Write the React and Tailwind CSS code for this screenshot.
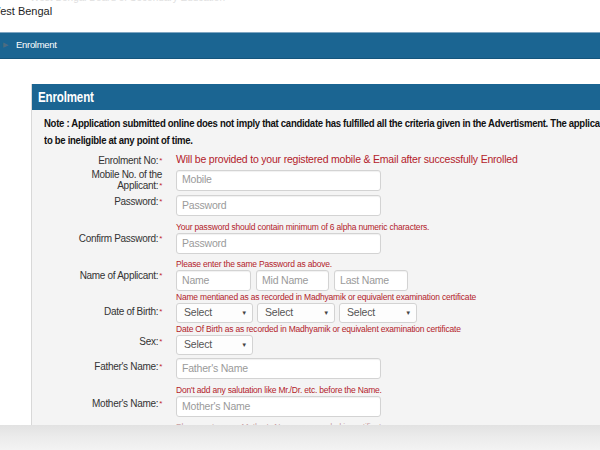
const sans = "font-['Liberation_Sans',Arial,sans-serif]";

function Label({ children, className = '' }) {
    return (
        <div className={`w-[130px] shrink-0 text-right text-[10px] tracking-[-0.3px] leading-[11px] text-[#333] ${className}`}>
            {children}
            <span className="ml-[1px] text-[#c0282d] text-[8px] align-top">*</span>
        </div>
    );
}

function Help({ children, className = '' }) {
    return <p className={`text-[8.5px] tracking-[-0.2px] leading-[11px] text-[#b3232b] whitespace-nowrap ${className}`}>{children}</p>;
}

function Field({ placeholder, w = 'w-[205px]' }) {
    return (
        <div className={`${w} h-[21px] bg-white border border-[#d3d3d3] rounded-[3px] shadow-[inset_0_1px_1px_rgba(0,0,0,0.06)] flex items-center px-[5px] text-[10.5px] tracking-[-0.2px] text-[#9a9a9a]`}>
            {placeholder}
        </div>
    );
}

function Select({ w = 'w-[77px]' }) {
    return (
        <div className={`${w} h-[20px] bg-[#fdfdfd] border border-[#d3d3d3] rounded-[3px] flex items-center justify-between pl-[7px] pr-[5px] text-[10.5px] tracking-[-0.2px] text-[#555]`}>
            <span>Select</span>
            <span className="text-[6px] text-[#444]">▼</span>
        </div>
    );
}

export default function App() {
    return (
        <div className={`w-[600px] h-[450px] overflow-hidden bg-white ${sans}`}>
            {/* site header, cut at the top */}
            <div className="h-[32px] overflow-hidden">
                <p className="-mt-[8px] ml-[30px] text-[10px] leading-[12px] text-[#e0e0e0] whitespace-nowrap">
                    West Bengal Board of Secondary Education
                </p>
                <p className="-ml-[10px] text-[11px] leading-[14px] text-[#1e1e1e]">
                    West Bengal
                </p>
            </div>

            {/* breadcrumb bar */}
            <div className="h-[27px] bg-[#1b6592] border-t border-[#7fa6c2] border-b border-b-[#15557c] flex items-center">
                <span className="ml-[3px] text-[7px] text-[#4d6c80]">▶</span>
                <span className="ml-[8px] text-[9.5px] tracking-[-0.3px] text-white">Enrolment</span>
            </div>

            <div className="h-[25px]" />

            {/* panel */}
            <div className="ml-[31px] w-[760px] border-l border-[#d8d8d8] bg-[#f4f4f4] h-[341px] overflow-hidden">
                <div className="h-[26px] bg-[#1b6592] flex items-center pl-[6px]">
                    <h2 className="text-[15px] font-bold text-white tracking-[-0.2px] scale-x-[0.77] origin-left">Enrolment</h2>
                </div>

                <div className="pt-[5px] pl-[12px]">
                    <div className="text-[11.5px] leading-[17px] font-bold text-[#111] tracking-[-0.35px] scale-x-[0.83] origin-left">
                        <p className="whitespace-nowrap">
                            Note : Application submitted online does not imply that candidate has fulfilled all the criteria given in the Advertisment. The applicant may be found
                        </p>
                        <p className="whitespace-nowrap">to be ineligible at any point of time.</p>
                    </div>
                </div>

                <div className="flex flex-col">
                    <div className="mt-[4px] h-[14px] flex items-center gap-[14px]">
                        <Label>Enrolment No:</Label>
                        <span className="text-[10.5px] tracking-[-0.2px] text-[#b3212a] whitespace-nowrap">
                            Will be provided to your registered mobile &amp; Email after successfully Enrolled
                        </span>
                    </div>

                    <div className="mt-[2px] flex items-center gap-[14px]">
                        <Label>Mobile No. of the<br />Applicant:</Label>
                        <Field placeholder="Mobile" />
                    </div>

                    <div className="mt-[4px] flex items-center gap-[14px]">
                        <Label className="pb-[8px]">Password:</Label>
                        <Field placeholder="Password" />
                    </div>

                    <div className="mt-[6px] flex items-center gap-[14px]">
                        <Label>Confirm Password:</Label>
                        <div>
                            <Help>Your password should contain minimum of 6 alpha numeric characters.</Help>
                            <Field placeholder="Password" />
                        </div>
                    </div>

                    <div className="mt-[5px] flex items-center gap-[14px]">
                        <Label>Name of Applicant:</Label>
                        <div>
                            <Help>Please enter the same Password as above.</Help>
                            <div className="flex gap-[5px]">
                                <Field placeholder="Name" w="w-[75px]" />
                                <Field placeholder="Mid Name" w="w-[73px]" />
                                <Field placeholder="Last Name" w="w-[74px]" />
                            </div>
                        </div>
                    </div>

                    <div className="mt-[1px] flex items-center gap-[14px]">
                        <Label className="pt-[8px]">Date of Birth:</Label>
                        <div>
                            <Help>Name mentianed as as recorded in Madhyamik or equivalent examination certificate</Help>
                            <div className="flex gap-[4px]">
                                <Select w="w-[77px]" />
                                <Select w="w-[78px]" />
                                <Select w="w-[78px]" />
                            </div>
                        </div>
                    </div>

                    <div className="mt-0 flex items-center gap-[14px]">
                        <Label className="pt-[4px]">Sex:</Label>
                        <div>
                            <Help className="pt-[1px]">Date Of Birth as as recorded in Madhyamik or equivalent examination certificate</Help>
                            <Select w="w-[77px]" />
                        </div>
                    </div>

                    <div className="mt-[3px] flex items-center gap-[14px]">
                        <Label className="pb-[4px]">Father&apos;s Name:</Label>
                        <Field placeholder="Father's Name" />
                    </div>

                    <div className="mt-[6px] flex items-center gap-[14px]">
                        <Label className="pb-[12px]">Mother&apos;s Name:</Label>
                        <div>
                            <Help>Don&apos;t add any salutation like Mr./Dr. etc. before the Name.</Help>
                            <Field placeholder="Mother's Name" />
                            <Help className="mt-[5px] text-[#c9a0a3]">Please enter your Mother&apos;s Name as recorded in certificate</Help>
                        </div>
                    </div>
                </div>
            </div>

            <div className="h-[25px] bg-linear-to-b from-[#e2e2e2] via-[#ececec] to-[#f3f3f3]" />
        </div>
    );
}
